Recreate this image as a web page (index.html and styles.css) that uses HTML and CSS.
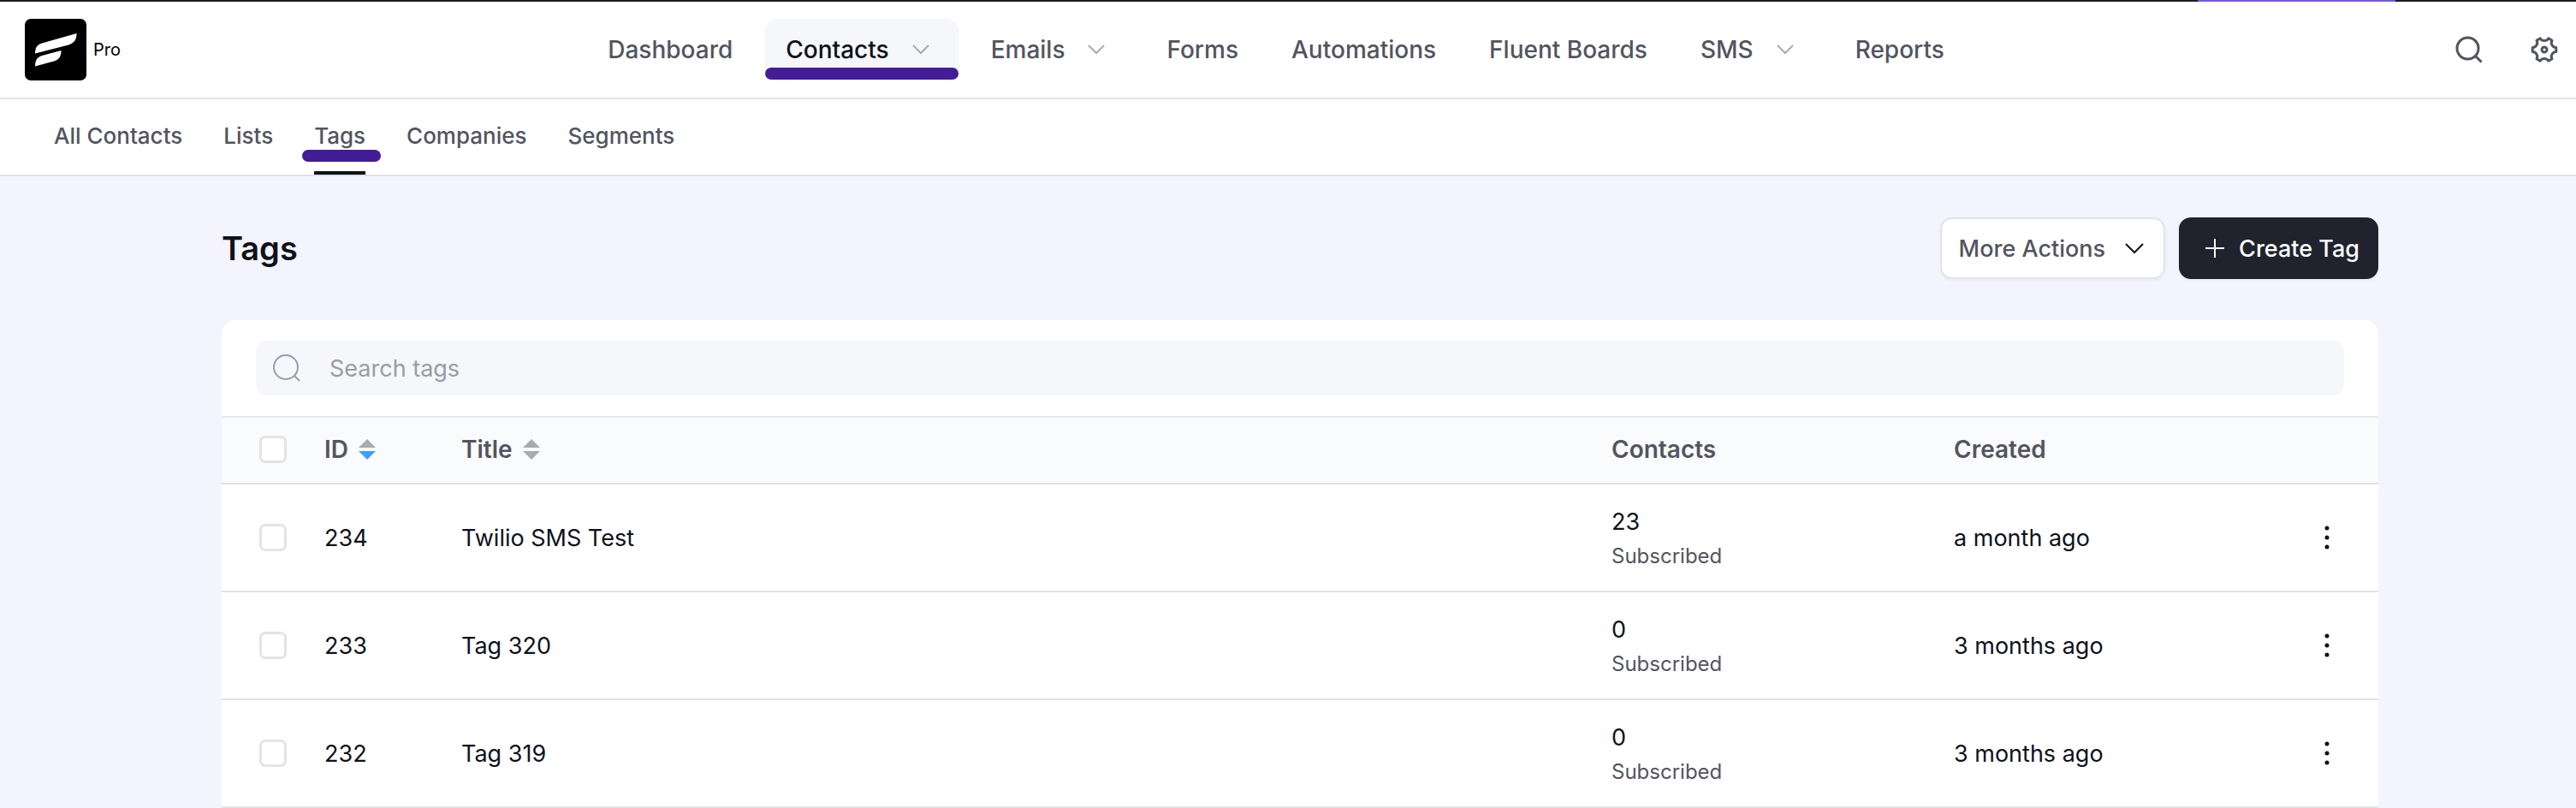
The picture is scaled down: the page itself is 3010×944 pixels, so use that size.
FILE: index.html
```html
<!DOCTYPE html>
<html lang="en">
<head>
    <meta charset="UTF-8">
    <meta name="viewport" content="width=device-width, initial-scale=1.0">
    <title>Tags</title>
    <link rel="stylesheet" href="styles.css">
</head>
<body>

    <div class="top-strip"><span class="top-strip-tab"></span></div>

    <header class="header">
        <a href="#" class="brand" aria-label="Home">
            <svg class="logo" viewBox="0 0 72 72">
                <rect width="72" height="72" rx="7" fill="#000"/>
                <path d="M60.500 17C60.500 24 58 28 51 30.500L12 40.500C12 34 14 30.500 20 28.500Z" fill="#fff"/>
                <path d="M42.500 37C42.500 44 40 47.500 34 49.500L12 55.500C12 49 14 45 20 43Z" fill="#fff"/>
            </svg>
            <span class="plan">Pro</span>
        </a>

        <nav class="main-nav">
            <a href="#">Dashboard</a>
            <a href="#" class="active marked">Contacts
                <svg class="caret" viewBox="0 0 26 26"><path d="M4 8l9 9 9-9"/></svg>
            </a>
            <a href="#">Emails
                <svg class="caret" viewBox="0 0 26 26"><path d="M4 8l9 9 9-9"/></svg>
            </a>
            <a href="#">Forms</a>
            <a href="#">Automations</a>
            <a href="#">Fluent Boards</a>
            <a href="#">SMS
                <svg class="caret" viewBox="0 0 26 26"><path d="M4 8l9 9 9-9"/></svg>
            </a>
            <a href="#">Reports</a>
        </nav>

        <div class="tools">
            <button type="button" aria-label="Search">
                <svg viewBox="0 0 32 32"><circle cx="14.500" cy="14.500" r="12.500"/><path d="M23.500 23.500l7 7"/></svg>
            </button>
            <button type="button" aria-label="Settings">
                <svg viewBox="0 0 32 32"><path stroke-linejoin="round" d="M20.800 2.800L25 5.300C22.800 8.600 25.800 13.800 29.800 13.600V18.400C25.800 18.200 22.800 23.400 25 26.700L20.800 29.200C19 25.600 13 25.600 11.200 29.200L7 26.700C9.200 23.400 6.200 18.200 2.200 18.400V13.600C6.200 13.800 9.200 8.600 7 5.300L11.200 2.800C13 6.400 19 6.400 20.800 2.800Z"/><circle cx="16" cy="16" r="3"/></svg>
            </button>
        </div>
    </header>

    <nav class="sub-nav">
        <a href="#">All Contacts</a>
        <a href="#">Lists</a>
        <a href="#" class="current marked">Tags</a>
        <a href="#">Companies</a>
        <a href="#">Segments</a>
    </nav>

    <main class="page">
        <div class="container">
            <div class="page-head">
                <h1>Tags</h1>
                <div class="actions">
                    <button type="button" class="btn">
                        More Actions
                        <svg viewBox="0 0 28 28"><path d="M4 9l10 10 10-10"/></svg>
                    </button>
                    <button type="button" class="btn btn-primary">
                        <svg viewBox="0 0 28 28"><path d="M14 3v22M3 14h22"/></svg>
                        Create Tag
                    </button>
                </div>
            </div>

            <section class="card">
                <div class="card-top">
                    <label class="search">
                        <svg viewBox="0 0 32 32"><circle cx="15" cy="15" r="14"/><path d="M25 25l6 6"/></svg>
                        <input type="text" placeholder="Search tags" aria-label="Search tags">
                    </label>
                </div>

                <table class="tags-table">
                    <colgroup>
                        <col class="col-check">
                        <col class="col-id">
                        <col>
                        <col class="col-contacts">
                        <col class="col-created">
                        <col class="col-menu">
                    </colgroup>
                    <thead>
                        <tr>
                            <th class="check"><input type="checkbox" aria-label="Select all"></th>
                            <th><div class="sortable">ID <span class="sort desc"></span></div></th>
                            <th><div class="sortable">Title <span class="sort"></span></div></th>
                            <th>Contacts</th>
                            <th>Created</th>
                            <th></th>
                        </tr>
                    </thead>
                    <tbody>
                        <tr>
                            <td class="check"><input type="checkbox" aria-label="Select 234"></td>
                            <td>234</td>
                            <td>Twilio SMS Test</td>
                            <td><div class="count">23</div><div class="status">Subscribed</div></td>
                            <td>a month ago</td>
                            <td class="menu"><button type="button" aria-label="Row actions"><svg viewBox="0 0 32 32"><circle cx="16" cy="5" r="2.500"/><circle cx="16" cy="16" r="2.500"/><circle cx="16" cy="27" r="2.500"/></svg></button></td>
                        </tr>
                        <tr>
                            <td class="check"><input type="checkbox" aria-label="Select 233"></td>
                            <td>233</td>
                            <td>Tag 320</td>
                            <td><div class="count">0</div><div class="status">Subscribed</div></td>
                            <td>3 months ago</td>
                            <td class="menu"><button type="button" aria-label="Row actions"><svg viewBox="0 0 32 32"><circle cx="16" cy="5" r="2.500"/><circle cx="16" cy="16" r="2.500"/><circle cx="16" cy="27" r="2.500"/></svg></button></td>
                        </tr>
                        <tr>
                            <td class="check"><input type="checkbox" aria-label="Select 232"></td>
                            <td>232</td>
                            <td>Tag 319</td>
                            <td><div class="count">0</div><div class="status">Subscribed</div></td>
                            <td>3 months ago</td>
                            <td class="menu"><button type="button" aria-label="Row actions"><svg viewBox="0 0 32 32"><circle cx="16" cy="5" r="2.500"/><circle cx="16" cy="16" r="2.500"/><circle cx="16" cy="27" r="2.500"/></svg></button></td>
                        </tr>
                    </tbody>
                </table>
            </section>
        </div>
    </main>

</body>
</html>
```
FILE: styles.css
```css
* {
    box-sizing: border-box;
}

body {
    margin: 0;
    font-family: Inter, "Liberation Sans", sans-serif;
    font-size: 27px;
    color: #0e121b;
    background-color: #f3f4fd;
}

a {
    color: inherit;
    text-decoration: none;
}

button {
    font: inherit;
    color: inherit;
    padding: 0;
    border: 0;
    background: none;
    cursor: pointer;
}

svg {
    display: block;
    fill: none;
    stroke: currentColor;
}

/* --- Top strip --- */
.top-strip {
    display: flex;
    justify-content: flex-end;
    height: 2px;
    padding-right: 211px;
    background-color: #1d1c1f;
}

.top-strip-tab {
    width: 231px;
    background-color: #7357e8;
}

/* --- Header --- */
.header {
    display: flex;
    align-items: center;
    justify-content: space-between;
    height: 114px;
    padding: 0 21px 0 29px;
    background-color: #fff;
    border-bottom: 2px solid #e4e5e7;
}

.brand {
    display: flex;
    align-items: center;
    gap: 8px;
}

.logo {
    width: 72px;
    height: 72px;
    stroke: none;
}

.plan {
    font-size: 20px;
    color: #000;
}

.main-nav {
    display: flex;
    gap: 14px;
    font-size: 28px;
    color: #525560;
    font-weight: 500;
}

.main-nav a {
    position: relative;
    display: flex;
    align-items: center;
    gap: 24px;
    height: 72px;
    padding: 0 24px;
    border-radius: 14px;
}

.main-nav .active {
    color: #0e121b;
    background-color: #f5f7fa;
}

.caret {
    width: 26px;
    height: 26px;
    margin-right: 7px;
    color: #a8abb2;
    stroke-width: 2;
}

/* Purple highlight bars over the selected links */
.marked::after {
    content: "";
    position: absolute;
    left: 0;
    right: 0;
    bottom: 1px;
    height: 14px;
    border-radius: 7px;
    background-color: #431c98;
}

.tools {
    display: flex;
    gap: 56px;
    padding-left: 28px;
    color: #525560;
}

.tools svg {
    width: 32px;
    height: 32px;
    stroke-width: 3;
}

/* --- Sub navigation --- */
.sub-nav {
    display: flex;
    gap: 48px;
    height: 90px;
    padding: 0 63px;
    font-size: 26px;
    font-weight: 500;
    color: #525560;
    background-color: #fff;
    border-bottom: 2px solid #e0e1e5;
}

.sub-nav a {
    position: relative;
    display: flex;
    align-items: center;
    border-bottom: 4px solid transparent;
}

.sub-nav .current {
    border-bottom-color: #0e121b;
}

.sub-nav .marked::after {
    left: -14px;
    right: -18px;
    bottom: 11px;
}

/* --- Page --- */
.page {
    padding-left: 28px;
}

.container {
    max-width: 2520px;
    margin: 0 auto;
}

.page-head {
    display: flex;
    align-items: center;
    justify-content: space-between;
    padding: 48px 0;
}

h1 {
    margin: 0;
    font-size: 38px;
    font-weight: 600;
}

.actions {
    display: flex;
    gap: 16px;
}

.btn {
    display: flex;
    align-items: center;
    gap: 20px;
    height: 72px;
    padding: 0 20px;
    font-weight: 500;
    color: #525560;
    background-color: #fff;
    border: 2px solid #e2e4ea;
    border-radius: 14px;
    box-shadow: 0 2px 4px rgba(14, 18, 27, 0.04);
}

.btn svg {
    width: 28px;
    height: 28px;
    color: #0e121b;
    stroke-width: 2;
}

.btn-primary {
    gap: 14px;
    padding: 0 20px 0 26px;
    color: #fff;
    background-color: #20232d;
    border-color: #20232d;
}

.btn-primary svg {
    color: #fff;
}

/* --- Card --- */
.card {
    overflow: hidden;
    background-color: #fff;
    border-radius: 16px 16px 0 0;
}

.card-top {
    padding: 24px 40px;
}

.search {
    display: flex;
    align-items: center;
    gap: 34px;
    height: 64px;
    padding: 0 20px;
    color: #999ca3;
    background-color: #f5f7fa;
    border-radius: 14px;
}

.search svg {
    width: 32px;
    height: 32px;
    stroke-width: 2;
}

.search input {
    flex: 1;
    padding: 0;
    font: inherit;
    color: #0e121b;
    border: 0;
    outline: 0;
    background: none;
}

.search input::placeholder {
    color: #999ca3;
}

/* --- Tags table --- */
.tags-table {
    width: 100%;
    table-layout: fixed;
    border-collapse: separate;
    border-spacing: 0;
}

.col-check { width: 100px; }
.col-id { width: 160px; }
.col-contacts { width: 400px; }
.col-created { width: 396px; }
.col-menu { width: 120px; }

.tags-table th,
.tags-table td {
    padding: 0 20px;
    text-align: left;
    border-bottom: 2px solid #e1e2e4;
}

.tags-table th {
    height: 80px;
    padding-bottom: 2px;
    font-size: 28px;
    font-weight: 600;
    color: #525560;
    background-color: #f9fbfd;
    border-top: 2px solid #e6e8ec;
}

.tags-table td {
    height: 126px;
}

.tags-table .check {
    padding-left: 44px;
    padding-right: 0;
}

.check input {
    appearance: none;
    display: block;
    width: 32px;
    height: 32px;
    margin: 0;
    border: 3px solid #e2e4e6;
    border-radius: 7px;
    background-color: #fff;
}

.sortable {
    display: flex;
    align-items: center;
    gap: 12px;
}

.sort {
    display: flex;
    flex-direction: column;
    gap: 4px;
}

.sort::before,
.sort::after {
    content: "";
    border: 10px solid transparent;
}

.sort::before {
    border-top: 0;
    border-bottom-color: #a8abb2;
}

.sort::after {
    border-bottom: 0;
    border-top-color: #a8abb2;
}

.sort.desc::after {
    border-top-color: #409eff;
}

.count {
    line-height: 44px;
}

.status {
    font-size: 24px;
    line-height: 36px;
    color: #525560;
}

.tags-table .menu {
    padding: 0;
}

.menu button {
    display: block;
    margin: 0 auto;
}

.menu svg {
    width: 32px;
    height: 32px;
    fill: #0e121b;
    stroke: none;
}
```
